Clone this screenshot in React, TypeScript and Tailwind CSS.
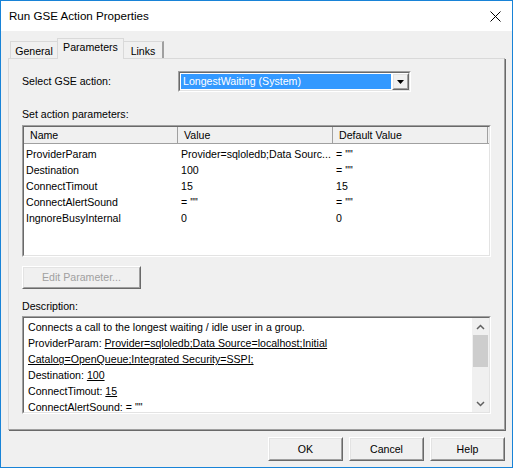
import React from "react";

const rows = [
  { name: "ProviderParam", value: "Provider=sqloledb;Data Sourc...", def: '= ""' },
  { name: "Destination", value: "100", def: '= ""' },
  { name: "ConnectTimout", value: "15", def: "15" },
  { name: "ConnectAlertSound", value: '= ""', def: '= ""' },
  { name: "IngnoreBusyInternal", value: "0", def: "0" },
];

function Raised({ className, children }: { className: string; children: React.ReactNode }) {
  return (
    <div className={`border border-t-white border-l-white border-r-[#696969] border-b-[#696969] ${className}`}>
      <div className="w-full h-full border border-t-[#e3e3e3] border-l-[#e3e3e3] border-r-[#a0a0a0] border-b-[#a0a0a0] bg-[#f0f0f0] flex items-center justify-center">
        {children}
      </div>
    </div>
  );
}

function Sunken({ className, children }: { className: string; children: React.ReactNode }) {
  return (
    <div className={`border border-t-[#a0a0a0] border-l-[#a0a0a0] border-r-white border-b-white ${className}`}>
      <div className="w-full h-full border border-t-[#696969] border-l-[#696969] border-r-[#e3e3e3] border-b-[#e3e3e3] bg-white overflow-hidden">
        {children}
      </div>
    </div>
  );
}

export default function App() {
  return (
    <div
      className="w-[513px] h-[468px] border border-[#1883d7] bg-[#f0f0f0] flex flex-col text-[10.6px] leading-[13px] text-black"
      style={{ fontFamily: '"Liberation Sans", Arial, sans-serif' }}
    >
      {/* title bar */}
      <div className="h-[30px] bg-white flex items-center pl-[8px] pr-[10px] shrink-0">
        <span className="text-[11.6px] leading-[16px] flex-1">Run GSE Action Properties</span>
        <svg width="11" height="11" viewBox="0 0 11 11" className="mr-[1px]">
          <path d="M0.5 0.5 L10.5 10.5 M10.5 0.5 L0.5 10.5" stroke="#000" strokeWidth="1" />
        </svg>
      </div>

      <div className="flex-1 px-[7px] pt-[7px] flex flex-col">
        {/* tabs */}
        <div className="flex items-end h-[20px] pl-[2px] relative z-10">
          <div className="w-[47px] h-[17px] border border-b-0 border-[#d9d9d9] border-r-0 flex items-center justify-center pt-[2px]">
            General
          </div>
          <div className="w-[67px] h-[21px] border border-b-0 border-[#d9d9d9] bg-[#f0f0f0] flex items-center justify-center -mb-[1px] pb-[3px]">
            Parameters
          </div>
          <div className="w-[40px] h-[17px] border border-b-0 border-l-0 border-t-[#d9d9d9] border-r-2 border-r-[#a0a0a0] flex items-center justify-center pt-[2px]">
            Links
          </div>
        </div>

        {/* panel */}
        <div className="h-[372px] border border-t-[#d9d9d9] border-l-[#d9d9d9] border-r-[#a0a0a0] border-b-[#a0a0a0] shadow-[1px_1px_0_#696969] pl-[13px] pt-[12px] flex flex-col">
          <div className="flex items-center h-[21px]">
            <div className="w-[156px]">Select GSE action:</div>
            <Sunken className="w-[233px] h-[21px]">
              <div className="flex h-full bg-white">
                <div className="flex-1 m-[1px] bg-[#3399ff] text-white flex items-center pl-[2px]">
                  LongestWaiting (System)
                </div>
                <Raised className="w-[17px] h-full">
                  <svg width="7" height="4" viewBox="0 0 7 4">
                    <path d="M0 0 H7 L3.5 4 Z" fill="#000" />
                  </svg>
                </Raised>
              </div>
            </Sunken>
          </div>

          <div className="mt-[16px]">Set action parameters:</div>

          <Sunken className="mt-[4px] w-[469px] h-[132px]">
            <div className="flex h-[17px] bg-[#f0f0f0] border-b border-[#a0a0a0]">
              <div className="w-[154px] pl-[6px] border-r border-[#a0a0a0] flex items-center">Name</div>
              <div className="w-[155px] pl-[6px] border-r border-[#a0a0a0] flex items-center">Value</div>
              <div className="w-[155px] pl-[6px] border-r border-[#a0a0a0] flex items-center">Default Value</div>
            </div>
            <div className="pt-[2px]">
              {rows.map((r) => (
                <div key={r.name} className="flex h-[16px] items-center">
                  <div className="w-[155px] pl-[2px] whitespace-nowrap">{r.name}</div>
                  <div className="w-[155px] pl-[2px] whitespace-nowrap">{r.value}</div>
                  <div className="w-[155px] pl-[2px] whitespace-nowrap">{r.def}</div>
                </div>
              ))}
            </div>
          </Sunken>

          <Raised className="mt-[9px] w-[119px] h-[23px]">
            <span className="text-[#a0a0a0]">Edit Parameter...</span>
          </Raised>

          <div className="mt-[11px]">Description:</div>

          <Sunken className="mt-[3px] w-[469px] h-[98px]">
            <div className="flex h-full">
              <div className="flex-1 pl-[4px] pt-[1px] leading-[16px] whitespace-nowrap">
                <div>Connects a call to the longest waiting / idle user in a group.</div>
                <div>
                  ProviderParam: <span className="underline">Provider=sqloledb;Data Source=localhost;Initial</span>
                </div>
                <div className="underline">Catalog=OpenQueue;Integrated Security=SSPI;</div>
                <div>
                  Destination: <span className="underline">100</span>
                </div>
                <div>
                  ConnectTimout: <span className="underline">15</span>
                </div>
                <div>
                  ConnectAlertSound: <span className="underline">= ""</span>
                </div>
              </div>
              <div className="w-[17px] h-full bg-[#f0f0f0] flex flex-col items-center">
                <div className="h-[17px] flex items-center justify-center">
                  <svg width="9" height="6" viewBox="0 0 9 6">
                    <path d="M1 5 L4.5 1.5 L8 5" stroke="#606060" strokeWidth="1.5" fill="none" />
                  </svg>
                </div>
                <div className="w-[15px] h-[32px] bg-[#cdcdcd]" />
                <div className="flex-1" />
                <div className="h-[17px] flex items-center justify-center">
                  <svg width="9" height="6" viewBox="0 0 9 6">
                    <path d="M1 1 L4.5 4.5 L8 1" stroke="#606060" strokeWidth="1.5" fill="none" />
                  </svg>
                </div>
              </div>
            </div>
          </Sunken>
        </div>

        {/* footer buttons */}
        <div className="flex justify-end gap-[6px] mt-[7px]">
          <Raised className="w-[75px] h-[24px]">OK</Raised>
          <Raised className="w-[75px] h-[24px]">Cancel</Raised>
          <Raised className="w-[75px] h-[24px]">Help</Raised>
        </div>
      </div>
    </div>
  );
}
